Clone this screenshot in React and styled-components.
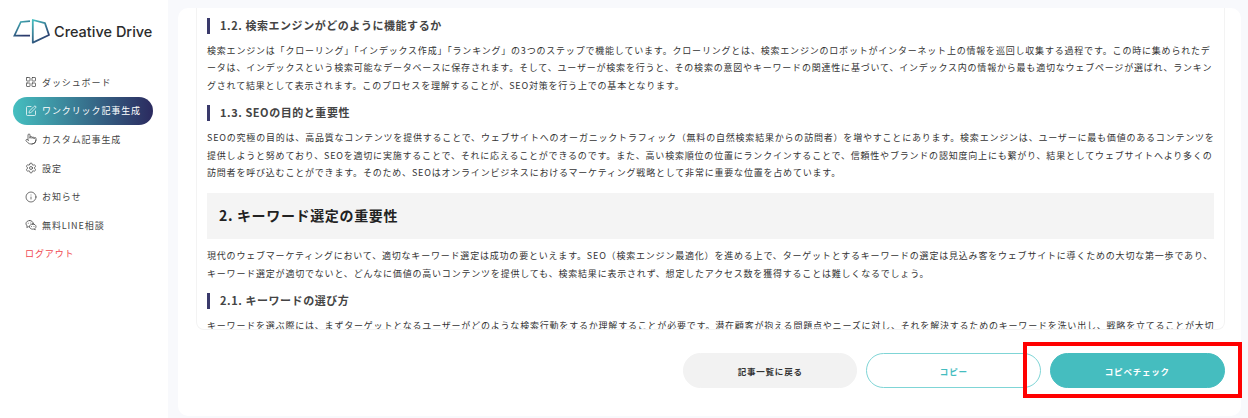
import styled, { createGlobalStyle } from 'styled-components';
import { LayoutGrid, SquarePen, Pointer, Settings, Info } from 'lucide-react';

const GlobalStyle = createGlobalStyle`
  html, body {
    margin: 0;
    background: #ffffff;
    font-family: "Noto Sans CJK JP", "Noto Sans", sans-serif;
  }
`;

const Page = styled.div`
  position: relative;
  display: flex;
  width: 1248px;
  height: 418px;
  overflow: hidden;
  background: #ffffff;
`;

const Sidebar = styled.aside`
  flex: 0 0 168px;
  display: flex;
  flex-direction: column;
  padding: 18px 0 0 13px;
  box-sizing: border-box;
`;

const Brand = styled.div`
  display: flex;
  align-items: center;
  gap: 3px;
  height: 26px;
  margin-bottom: 24px;
`;

const BrandName = styled.span`
  font-family: Inter, sans-serif;
  font-size: 14.5px;
  font-weight: 500;
  color: #2b2b2b;
  white-space: nowrap;
`;

const Nav = styled.nav`
  display: flex;
  flex-direction: column;
`;

const NavItem = styled.div`
  display: flex;
  align-items: center;
  gap: 5px;
  width: 140px;
  height: 28.6px;
  padding-left: 12px;
  box-sizing: border-box;
  border-radius: 14px;
  font-size: 9px;
  letter-spacing: 0.9px;
  color: ${(p) => (p.$active ? '#ffffff' : p.$danger ? '#f0484f' : '#444444')};
  background: ${(p) => (p.$active ? 'linear-gradient(90deg, #45bfc0 0%, #2b2a5f 100%)' : 'transparent')};
`;

const Main = styled.main`
  flex: 1;
  background: #f8f9fc;
  padding: 8px 8px 2px 10px;
  display: flex;
`;

const Card = styled.section`
  flex: 1;
  background: #ffffff;
  border-radius: 10px;
  padding: 0 16px 0 18px;
  display: flex;
  flex-direction: column;
`;

const Article = styled.div`
  height: 322px;
  overflow: hidden;
  box-sizing: border-box;
  padding: 9.5px 9px 0 10px;
  border: 1px solid #f3f3f3;
  border-top: none;
  border-radius: 0 0 8px 8px;
`;

const SubHeading = styled.h3`
  display: flex;
  align-items: center;
  box-sizing: border-box;
  height: 16px;
  margin: 0 0 8px;
  padding: 0 0 2px 10px;
  border-left: 3px solid #3a3a6b;
  font-size: 11px;
  font-weight: 700;
  letter-spacing: 0.55px;
  color: #444444;
`;

const Paragraph = styled.p`
  margin: 0 0 11px;
  font-size: 9px;
  line-height: 17.5px;
  letter-spacing: 0.8px;
  color: #333333;
  white-space: nowrap;
`;

const SectionHeading = styled.h2`
  display: flex;
  align-items: center;
  box-sizing: border-box;
  height: 46.5px;
  margin: 0 1px 8px 0;
  padding: 0 0 2px 12px;
  background: #f4f4f4;
  font-size: 14px;
  font-weight: 700;
  letter-spacing: 0.65px;
  color: #222222;
`;

const Actions = styled.div`
  display: flex;
  justify-content: flex-end;
  gap: 9px;
  margin-top: 23px;
`;

const ActionButton = styled.button`
  width: 174.6px;
  height: 35px;
  padding: 0;
  border-radius: 18px;
  font-family: inherit;
  font-size: 8.5px;
  font-weight: 700;
  letter-spacing: 0.8px;
  border: 1px solid ${(p) => (p.$variant === 'outline' ? '#7fd5d6' : p.$variant === 'primary' ? '#45bdbf' : '#f2f2f2')};
  background: ${(p) => (p.$variant === 'primary' ? '#45bdbf' : p.$variant === 'outline' ? '#ffffff' : '#f2f2f2')};
  color: ${(p) => (p.$variant === 'primary' ? '#ffffff' : p.$variant === 'outline' ? '#45bdbf' : '#333333')};
`;

const Highlight = styled.div`
  position: absolute;
  left: 1023px;
  top: 342px;
  width: 219px;
  height: 56px;
  box-sizing: border-box;
  border: 4px solid #ff0000;
`;

function Logo() {
  return (
    <svg width="38" height="26" viewBox="0 0 38 26" fill="none">
      <defs>
        <linearGradient id="logoGrad" x1="0" y1="0" x2="0.6" y2="1">
          <stop offset="0" stopColor="#45bfc0" />
          <stop offset="1" stopColor="#2b3a6c" />
        </linearGradient>
      </defs>
      <path d="M17 3.2 L7.8 4 L1.4 17.6 H17" stroke="url(#logoGrad)" strokeWidth="1.7" />
      <path d="M19.8 2 L32 5.2 L36 17 L19.8 24.6 Z" stroke="url(#logoGrad)" strokeWidth="1.8" strokeLinejoin="round" />
    </svg>
  );
}

// 吹き出しが重なったアイコン
function ChatIcon() {
  return (
    <svg width="12" height="12" viewBox="0 0 24 24" fill="none" stroke="currentColor" strokeWidth="1.6" strokeLinecap="round" strokeLinejoin="round">
      <path d="M9.5 3C5.4 3 2 5.8 2 9.3c0 1.8.9 3.4 2.3 4.6L3.6 17l3.2-1.6c.5.1 1 .2 1.5.3" />
      <path d="M17 9.8C16.4 6 13.4 3 9.5 3" />
      <path d="M15.5 10c-3.6 0-6.5 2.3-6.5 5.2s2.9 5.2 6.5 5.2c.7 0 1.4-.1 2-.3l3 1.4-.6-2.8c1.3-.9 2.1-2.1 2.1-3.5 0-2.9-2.9-5.2-6.5-5.2z" />
      <path d="M13 15h.01M18 15h.01M6.5 8.5h.01M11.5 8h.01" />
    </svg>
  );
}

const navItems = [
  { label: 'ダッシュボード', icon: LayoutGrid },
  { label: 'ワンクリック記事生成', icon: SquarePen, active: true },
  { label: 'カスタム記事生成', icon: Pointer },
  { label: '設定', icon: Settings },
  { label: 'お知らせ', icon: Info },
  { label: '無料LINE相談', icon: ChatIcon },
  { label: 'ログアウト', danger: true },
];

function App() {
  return (
    <Page>
      <GlobalStyle />
      <Sidebar>
        <Brand>
          <Logo />
          <BrandName>Creative Drive</BrandName>
        </Brand>
        <Nav>
          {navItems.map(({ label, icon: Icon, active, danger }) => (
            <NavItem key={label} $active={active} $danger={danger}>
              {Icon && <Icon size={12} strokeWidth={1.5} />}
              {label}
            </NavItem>
          ))}
        </Nav>
      </Sidebar>
      <Main>
        <Card>
          <Article>
            <SubHeading>1.2. 検索エンジンがどのように機能するか</SubHeading>
            <Paragraph>
              検索エンジンは「クローリング」「インデックス作成」「ランキング」の3つのステップで機能しています。クローリングとは、検索エンジンのロボットがインターネット上の情報を巡回し収集する過程です。この時に集められたデ<br />
              ータは、インデックスという検索可能なデータベースに保存されます。そして、ユーザーが検索を行うと、その検索の意図やキーワードの関連性に基づいて、インデックス内の情報から最も適切なウェブページが選ばれ、ランキン<br />
              グされて結果として表示されます。このプロセスを理解することが、SEO対策を行う上での基本となります。
            </Paragraph>
            <SubHeading>1.3. SEOの目的と重要性</SubHeading>
            <Paragraph>
              SEOの究極の目的は、高品質なコンテンツを提供することで、ウェブサイトへのオーガニックトラフィック（無料の自然検索結果からの訪問者）を増やすことにあります。検索エンジンは、ユーザーに最も価値のあるコンテンツを<br />
              提供しようと努めており、SEOを適切に実施することで、それに応えることができるのです。また、高い検索順位の位置にランクインすることで、信頼性やブランドの認知度向上にも繋がり、結果としてウェブサイトへより多くの<br />
              訪問者を呼び込むことができます。そのため、SEOはオンラインビジネスにおけるマーケティング戦略として非常に重要な位置を占めています。
            </Paragraph>
            <SectionHeading>2. キーワード選定の重要性</SectionHeading>
            <Paragraph>
              現代のウェブマーケティングにおいて、適切なキーワード選定は成功の要といえます。SEO（検索エンジン最適化）を進める上で、ターゲットとするキーワードの選定は見込み客をウェブサイトに導くための大切な第一歩であり、<br />
              キーワード選定が適切でないと、どんなに価値の高いコンテンツを提供しても、検索結果に表示されず、想定したアクセス数を獲得することは難しくなるでしょう。
            </Paragraph>
            <SubHeading>2.1. キーワードの選び方</SubHeading>
            <Paragraph>
              キーワードを選ぶ際には、まずターゲットとなるユーザーがどのような検索行動をするか理解することが必要です。潜在顧客が抱える問題点やニーズに対し、それを解決するためのキーワードを洗い出し、戦略を立てることが大切
            </Paragraph>
          </Article>
          <Actions>
            <ActionButton>記事一覧に戻る</ActionButton>
            <ActionButton $variant="outline">コピー</ActionButton>
            <ActionButton $variant="primary">コピペチェック</ActionButton>
          </Actions>
        </Card>
      </Main>
      <Highlight />
    </Page>
  );
}

export default App;
